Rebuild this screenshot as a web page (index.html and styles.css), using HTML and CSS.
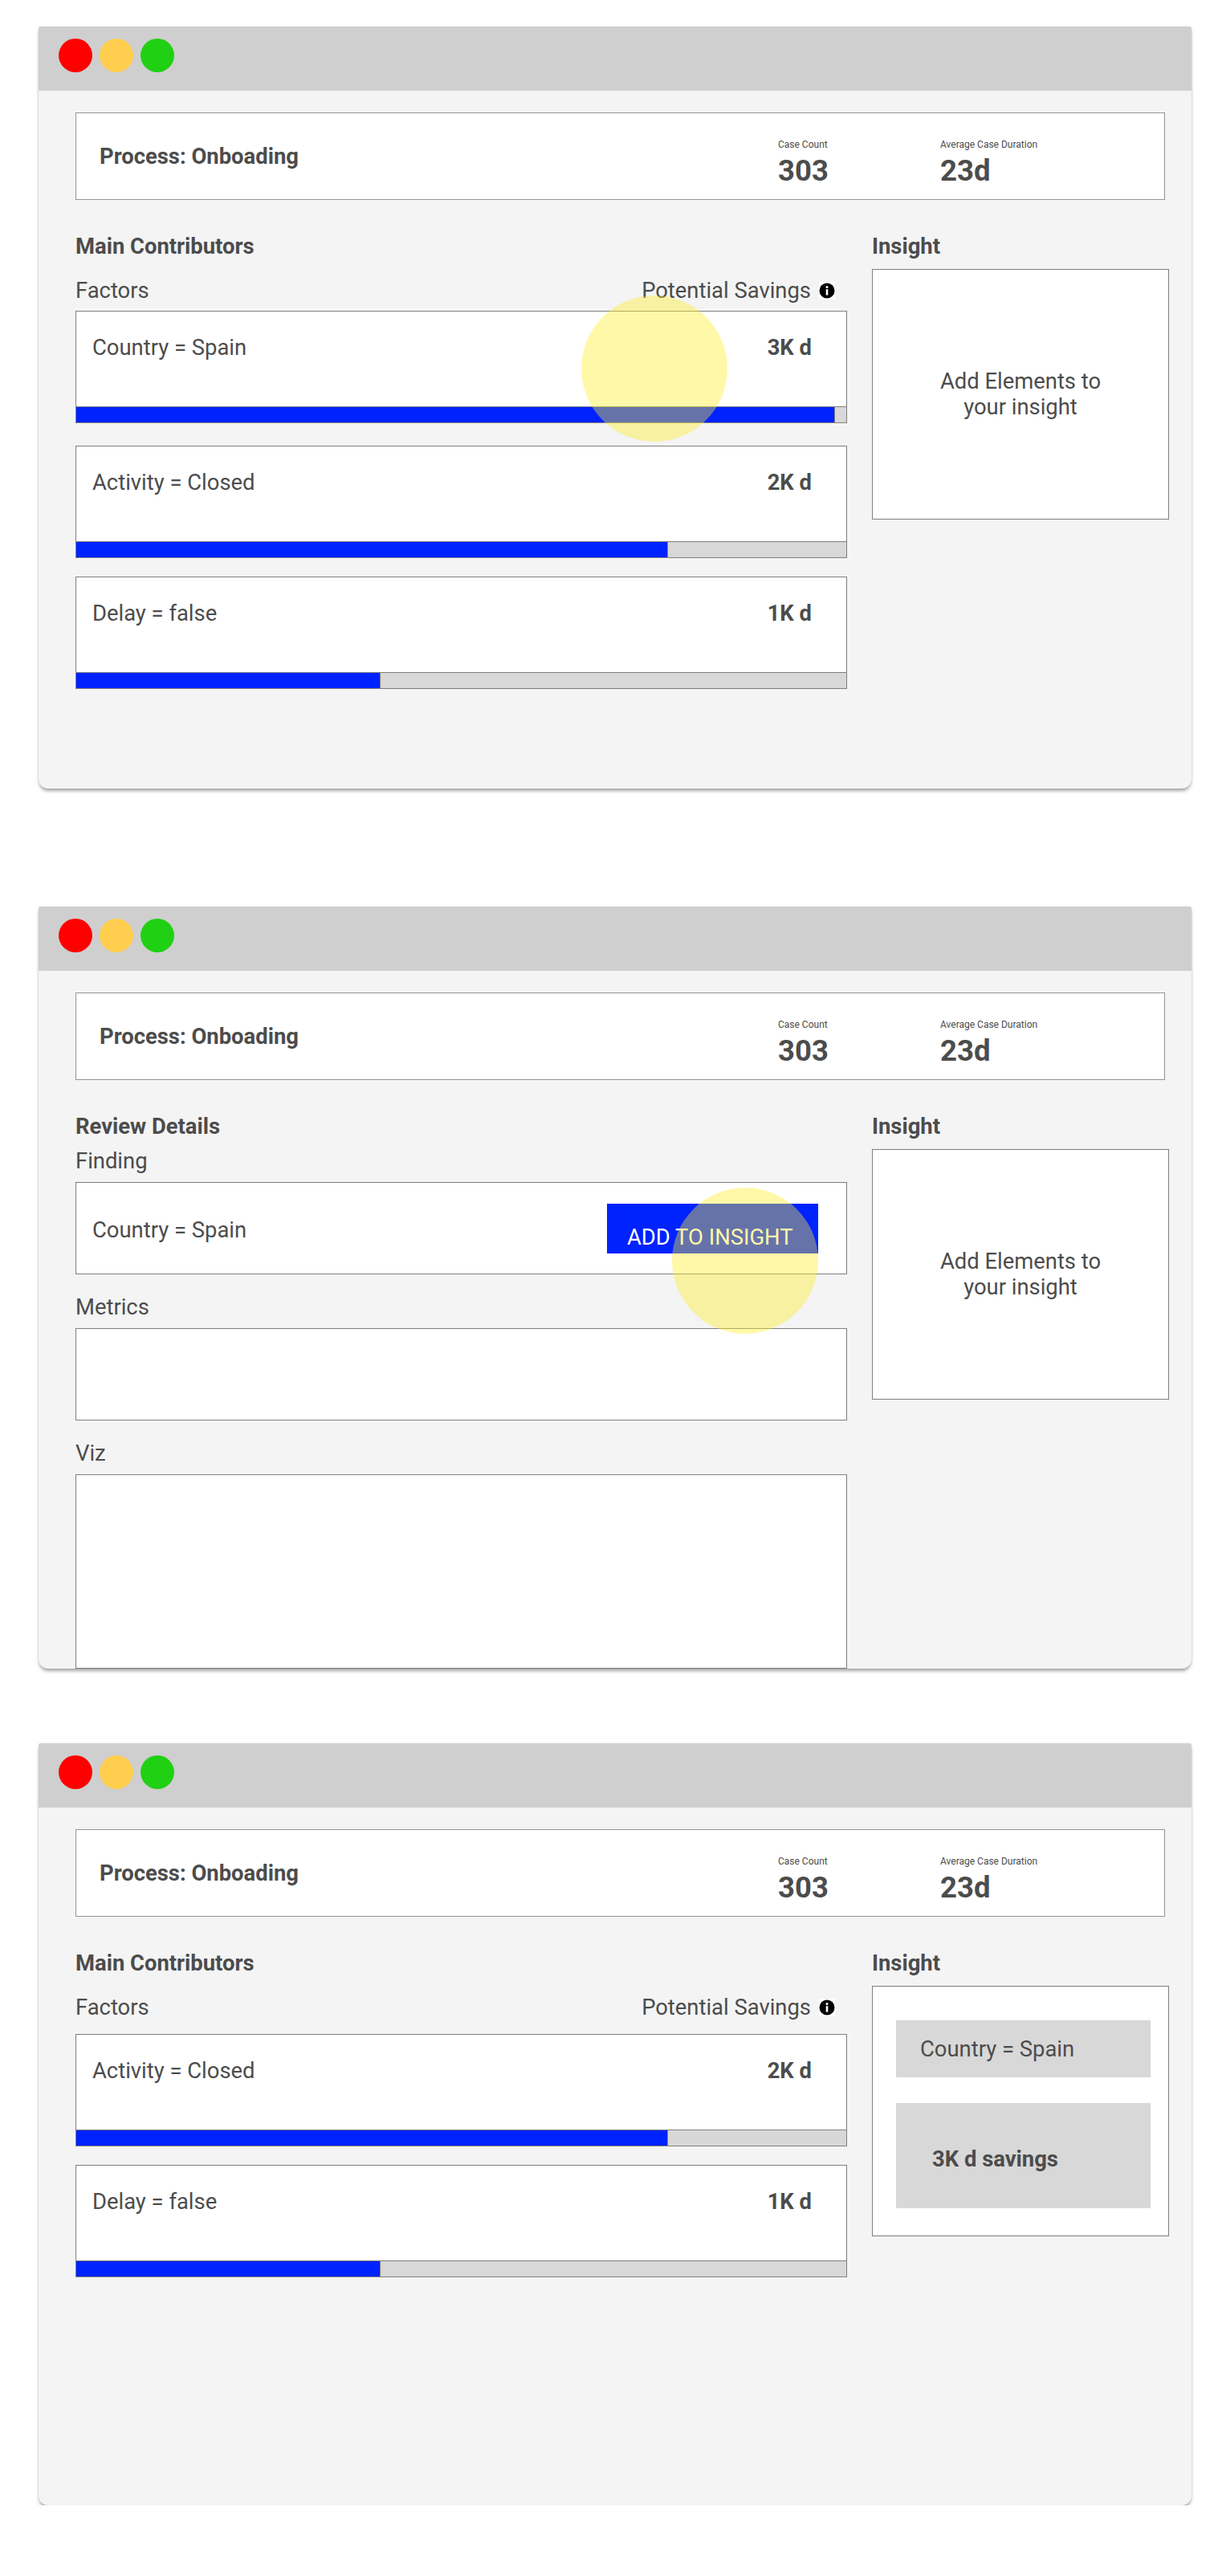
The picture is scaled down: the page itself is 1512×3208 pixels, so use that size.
FILE: index.html
```html
<!DOCTYPE html>
<html lang="en">
<head>
    <meta charset="UTF-8">
    <title>Process Insight Flow</title>
    <link rel="stylesheet" href="styles.css">
</head>
<body>
    <!-- Step 1: pick a contributor -->
    <div class="window window-first">
        <div class="titlebar">
            <span class="dot dot-red"></span>
            <span class="dot dot-yellow"></span>
            <span class="dot dot-green"></span>
        </div>
        <div class="content">
            <div class="process">
                <div class="process-name">Process: Onboading</div>
                <div class="stat stat-count">
                    <div class="stat-label">Case Count</div>
                    <div class="stat-value">303</div>
                </div>
                <div class="stat">
                    <div class="stat-label">Average Case Duration</div>
                    <div class="stat-value">23d</div>
                </div>
            </div>
            <div class="columns">
                <div class="left">
                    <h3>Main Contributors</h3>
                    <div class="factors-head">
                        <span>Factors</span>
                        <span class="savings-head">Potential Savings
                            <svg class="info" viewBox="0 0 20 22" width="20" height="22">
                                <rect width="20" height="22" fill="#fff"/>
                                <circle cx="10" cy="11" r="9.5" fill="#000"/>
                                <circle cx="10" cy="6.6" r="1.5" fill="#fff"/>
                                <rect x="8.7" y="9.2" width="2.6" height="7.4" fill="#fff"/>
                            </svg>
                        </span>
                    </div>
                    <div class="factor factor-first">
                        <div class="factor-row">
                            <span>Country = Spain</span>
                            <b>3K d</b>
                        </div>
                        <div class="bar"><div class="fill" style="width: 98.5%"></div></div>
                    </div>
                    <div class="factor">
                        <div class="factor-row">
                            <span>Activity = Closed</span>
                            <b>2K d</b>
                        </div>
                        <div class="bar"><div class="fill" style="width: 76.9%"></div></div>
                    </div>
                    <div class="factor">
                        <div class="factor-row">
                            <span>Delay = false</span>
                            <b>1K d</b>
                        </div>
                        <div class="bar"><div class="fill" style="width: 39.5%"></div></div>
                    </div>
                </div>
                <div class="right">
                    <h3>Insight</h3>
                    <div class="insight insight-empty">Add Elements to<br>your insight</div>
                </div>
            </div>
        </div>
        <div class="tap tap-factor"></div>
    </div>

    <!-- Step 2: review details -->
    <div class="window window-second">
        <div class="titlebar">
            <span class="dot dot-red"></span>
            <span class="dot dot-yellow"></span>
            <span class="dot dot-green"></span>
        </div>
        <div class="content">
            <div class="process">
                <div class="process-name">Process: Onboading</div>
                <div class="stat stat-count">
                    <div class="stat-label">Case Count</div>
                    <div class="stat-value">303</div>
                </div>
                <div class="stat">
                    <div class="stat-label">Average Case Duration</div>
                    <div class="stat-value">23d</div>
                </div>
            </div>
            <div class="columns">
                <div class="left">
                    <h3>Review Details</h3>
                    <div class="field-label field-label-first">Finding</div>
                    <div class="panel panel-finding">
                        <span class="finding-text">Country = Spain</span>
                        <button class="add-btn">ADD TO INSIGHT</button>
                    </div>
                    <div class="field-label">Metrics</div>
                    <div class="panel"></div>
                    <div class="field-label">Viz</div>
                    <div class="panel panel-viz"></div>
                </div>
                <div class="right">
                    <h3>Insight</h3>
                    <div class="insight insight-empty">Add Elements to<br>your insight</div>
                </div>
            </div>
        </div>
        <div class="tap tap-button"></div>
    </div>

    <!-- Step 3: finding added -->
    <div class="window window-third">
        <div class="titlebar">
            <span class="dot dot-red"></span>
            <span class="dot dot-yellow"></span>
            <span class="dot dot-green"></span>
        </div>
        <div class="content">
            <div class="process">
                <div class="process-name">Process: Onboading</div>
                <div class="stat stat-count">
                    <div class="stat-label">Case Count</div>
                    <div class="stat-value">303</div>
                </div>
                <div class="stat">
                    <div class="stat-label">Average Case Duration</div>
                    <div class="stat-value">23d</div>
                </div>
            </div>
            <div class="columns">
                <div class="left">
                    <h3>Main Contributors</h3>
                    <div class="factors-head factors-head-wide">
                        <span>Factors</span>
                        <span class="savings-head">Potential Savings
                            <svg class="info" viewBox="0 0 20 22" width="20" height="22">
                                <rect width="20" height="22" fill="#fff"/>
                                <circle cx="10" cy="11" r="9.5" fill="#000"/>
                                <circle cx="10" cy="6.6" r="1.5" fill="#fff"/>
                                <rect x="8.7" y="9.2" width="2.6" height="7.4" fill="#fff"/>
                            </svg>
                        </span>
                    </div>
                    <div class="factor">
                        <div class="factor-row">
                            <span>Activity = Closed</span>
                            <b>2K d</b>
                        </div>
                        <div class="bar"><div class="fill" style="width: 76.9%"></div></div>
                    </div>
                    <div class="factor">
                        <div class="factor-row">
                            <span>Delay = false</span>
                            <b>1K d</b>
                        </div>
                        <div class="bar"><div class="fill" style="width: 39.5%"></div></div>
                    </div>
                </div>
                <div class="right">
                    <h3>Insight</h3>
                    <div class="insight insight-filled">
                        <div class="chip">Country = Spain</div>
                        <div class="chip chip-savings">3K d savings</div>
                    </div>
                </div>
            </div>
        </div>
    </div>
</body>
</html>
```

FILE: styles.css
```css
* {
    box-sizing: border-box;
}

body {
    margin: 0;
    padding: 33px 0 0 48px;
    background: #fff;
    color: #4c4c4c;
    font-family: Roboto, "Liberation Sans", sans-serif;
    font-size: 27.4px;
    line-height: 32px;
}

.window {
    position: relative;
    width: 1436px;
    height: 949px;
    background: #f4f4f4;
    border-radius: 3px 3px 12px 12px;
    box-shadow: 0 4px 4px -1px rgba(0, 0, 0, 0.35), 0 0 3px rgba(0, 0, 0, 0.1);
}

.window-first {
    margin-bottom: 147px;
}

.window-second {
    margin-bottom: 93px;
}

.titlebar {
    display: flex;
    gap: 9px;
    height: 80px;
    padding: 15px 0 0 25px;
    background: #cfcfcf;
    border-radius: 3px 3px 0 0;
}

.dot {
    width: 42px;
    height: 42px;
    border-radius: 50%;
}

.dot-red {
    background: #ff0000;
}

.dot-yellow {
    background: #ffce4f;
}

.dot-green {
    background: #20d013;
}

.content {
    padding: 27px 0 0 46px;
}

.process {
    display: flex;
    align-items: flex-start;
    width: 1357px;
    height: 109px;
    background: #fff;
    border: 1px solid #979393;
}

.process-name {
    align-self: center;
    width: 874px;
    padding-left: 29px;
    font-weight: 700;
}

.stat {
    padding-top: 31px;
}

.stat-count {
    width: 202px;
}

.stat-label {
    font-size: 12px;
    line-height: 16px;
}

.stat-value {
    margin-top: 4px;
    font-size: 36.5px;
    font-weight: 700;
    line-height: 42px;
}

.columns {
    display: flex;
    gap: 31px;
    margin-top: 42px;
}

.left {
    width: 961px;
}

.right {
    width: 370px;
}

h3 {
    margin: 0;
    font-size: 27.4px;
    font-weight: 700;
    line-height: 32px;
}

.factors-head {
    display: flex;
    justify-content: space-between;
    margin: 23px 0 9px;
    padding-right: 15px;
}

.factors-head-wide {
    margin-bottom: 17px;
}

.savings-head {
    display: flex;
    align-items: center;
    gap: 10px;
}

.factor {
    height: 140px;
    margin-bottom: 23px;
    background: #fff;
    border: 1px solid #7f7f7f;
}

.factor-first {
    margin-bottom: 28px;
}

.factor-row {
    display: flex;
    justify-content: space-between;
    height: 118px;
    padding: 29px 43px 0 20px;
}

.factor-row b {
    font-weight: 700;
}

.bar {
    height: 20px;
    background: #d8d8d8;
    border-top: 1px solid #7f7f7f;
}

.fill {
    height: 100%;
    background: #0022ff;
    border-right: 1px solid #7f7f7f;
}

.field-label {
    margin: 25px 0 10px;
}

.field-label-first {
    margin-top: 11px;
}

.panel {
    height: 115px;
    background: #fff;
    border: 1px solid #7f7f7f;
}

.panel-finding {
    display: flex;
    justify-content: space-between;
    align-items: flex-start;
    padding: 26px 35px 0 20px;
}

.finding-text {
    margin-top: 17px;
}

.panel-viz {
    height: 242px;
}

.add-btn {
    width: 263px;
    height: 62px;
    padding: 21px 0 0 25px;
    background: #0022ff;
    border: none;
    color: #fff;
    font: inherit;
    text-align: left;
}

.insight {
    height: 312px;
    margin-top: 12px;
    background: #fff;
    border: 1px solid #7f7f7f;
}

.insight-empty {
    display: flex;
    align-items: center;
    justify-content: center;
    text-align: center;
}

.insight-filled {
    padding: 42px 22px 0 29px;
}

.chip {
    display: flex;
    align-items: center;
    height: 71px;
    padding-left: 30px;
    background: #d8d8d8;
}

.chip-savings {
    height: 131px;
    margin-top: 32px;
    padding: 8px 0 0 45px;
    font-weight: 700;
}

/* tap markers sit on top of the window content */
.tap {
    position: absolute;
    width: 182px;
    height: 182px;
    border-radius: 50%;
    background: rgba(255, 238, 40, 0.4);
}

.tap-factor {
    left: 676px;
    top: 335px;
}

.tap-button {
    left: 789px;
    top: 350px;
}
```
